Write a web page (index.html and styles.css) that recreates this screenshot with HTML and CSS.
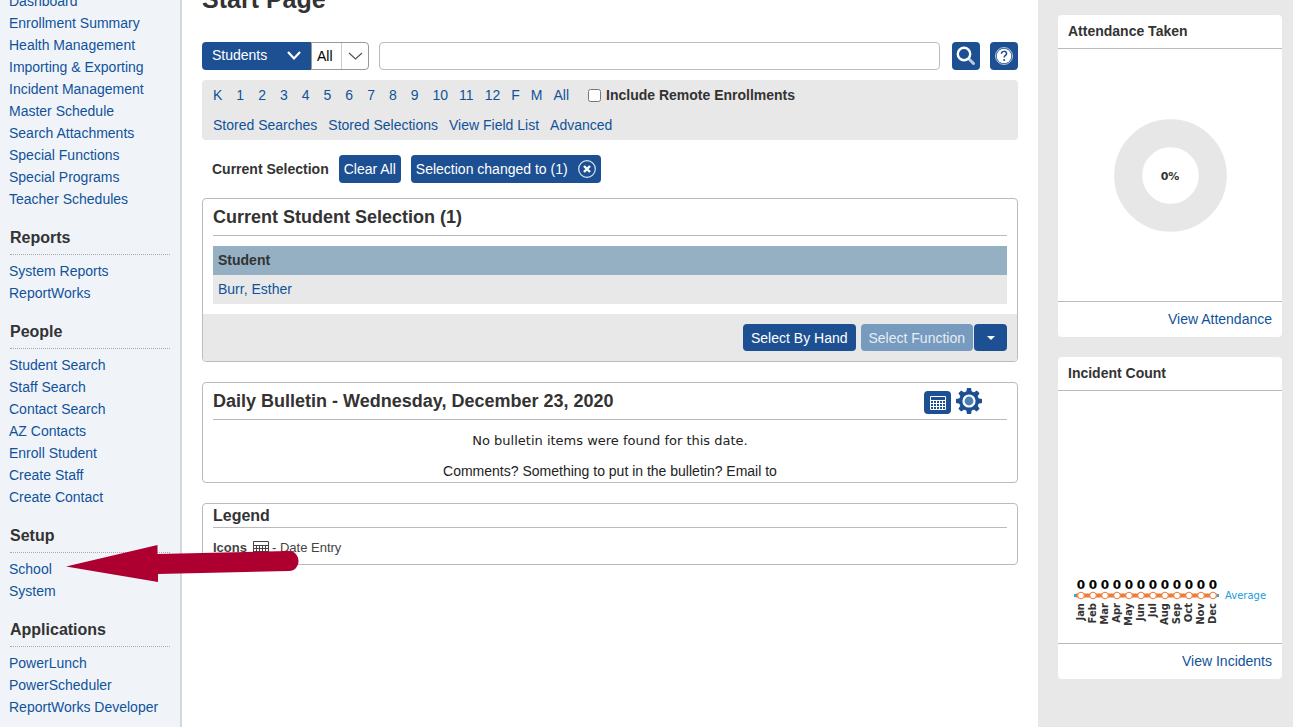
FILE: index.html
```html
<!DOCTYPE html>
<html lang="en">
<head>
    <meta charset="UTF-8">
    <meta name="viewport" content="width=device-width, initial-scale=1.0">
    <title>Start Page</title>
    <link rel="stylesheet" href="styles.css">
</head>
<body>
    <div class="layout">
        <!-- Left navigation -->
        <nav class="sidebar">
            <ul class="nav-list nav-list-first">
                <li><a href="#">Dashboard</a></li>
                <li><a href="#">Enrollment Summary</a></li>
                <li><a href="#">Health Management</a></li>
                <li><a href="#">Importing &amp; Exporting</a></li>
                <li><a href="#">Incident Management</a></li>
                <li><a href="#">Master Schedule</a></li>
                <li><a href="#">Search Attachments</a></li>
                <li><a href="#">Special Functions</a></li>
                <li><a href="#">Special Programs</a></li>
                <li><a href="#">Teacher Schedules</a></li>
            </ul>
            <h3>Reports</h3>
            <ul class="nav-list">
                <li><a href="#">System Reports</a></li>
                <li><a href="#">ReportWorks</a></li>
            </ul>
            <h3>People</h3>
            <ul class="nav-list">
                <li><a href="#">Student Search</a></li>
                <li><a href="#">Staff Search</a></li>
                <li><a href="#">Contact Search</a></li>
                <li><a href="#">AZ Contacts</a></li>
                <li><a href="#">Enroll Student</a></li>
                <li><a href="#">Create Staff</a></li>
                <li><a href="#">Create Contact</a></li>
            </ul>
            <h3>Setup</h3>
            <ul class="nav-list">
                <li><a href="#">School</a></li>
                <li><a href="#">System</a></li>
            </ul>
            <h3>Applications</h3>
            <ul class="nav-list">
                <li><a href="#">PowerLunch</a></li>
                <li><a href="#">PowerScheduler</a></li>
                <li><a href="#">ReportWorks Developer</a></li>
            </ul>
        </nav>

        <main class="content">
            <h1>Start Page</h1>

            <!-- Search -->
            <form class="search-row">
                <div class="select-wrap">
                    <select class="select-type" aria-label="Search type">
                        <option>Students</option>
                    </select>
                    <svg class="chevron chevron-light" width="14" height="11" viewBox="0 0 14 11"><path d="M1 1l6 6.500L13 1" fill="none" stroke="#fff" stroke-width="2.2"/></svg>
                </div>
                <div class="select-wrap">
                    <select class="select-scope" aria-label="Search scope">
                        <option>All</option>
                    </select>
                    <svg class="chevron chevron-dark" width="28" height="28" viewBox="0 0 28 28"><path d="M.5 1v26" stroke="#ccc"/><path d="M8 11l6.500 6L21 11" fill="none" stroke="#555" stroke-width="1.2"/></svg>
                </div>
                <input class="search-box" type="text" aria-label="Search">
                <button class="icon-button" type="button" aria-label="Search">
                    <svg width="28" height="28" viewBox="0 0 28 28"><path d="M17 17l4.500 4.500" stroke="#b9cbe0" stroke-width="3" stroke-linecap="round"/><circle cx="12" cy="12" r="6.200" fill="none" stroke="#fff" stroke-width="2.400"/></svg>
                </button>
                <button class="icon-button help-button" type="button" aria-label="Help">
                    <svg width="28" height="28" viewBox="0 0 28 28"><circle cx="14" cy="14" r="8.500" fill="none" stroke="#b9cbe0" stroke-width="1"/><circle cx="14" cy="14" r="7.300" fill="#fff"/><path d="M11.400 11.800c.1-3.200 5.300-3.200 5.200-.2-.1 1.700-2.500 1.900-2.500 3.900" fill="none" stroke="#1d5092" stroke-width="1.500"/><circle cx="14.100" cy="18" r="1" fill="#1d5092"/></svg>
                </button>
            </form>

            <div class="filters">
                <div class="filter-row grades">
                    <a class="grade" href="#">K</a>
                    <a class="grade" href="#">1</a>
                    <a class="grade" href="#">2</a>
                    <a class="grade" href="#">3</a>
                    <a class="grade" href="#">4</a>
                    <a class="grade" href="#">5</a>
                    <a class="grade" href="#">6</a>
                    <a class="grade" href="#">7</a>
                    <a class="grade" href="#">8</a>
                    <a class="grade" href="#">9</a>
                    <a href="#">10</a>
                    <a href="#">11</a>
                    <a href="#">12</a>
                    <a href="#">F</a>
                    <a href="#">M</a>
                    <a href="#">All</a>
                    <label class="remote"><input type="checkbox"> Include Remote Enrollments</label>
                </div>
                <div class="filter-row searches">
                    <a href="#">Stored Searches</a>
                    <a href="#">Stored Selections</a>
                    <a href="#">View Field List</a>
                    <a href="#">Advanced</a>
                </div>
            </div>

            <div class="selection-row">
                <strong>Current Selection</strong>
                <button class="chip" type="button">Clear All</button>
                <button class="chip" type="button">Selection changed to (1)
                    <svg width="18" height="18" viewBox="0 0 18 18"><circle cx="9" cy="9" r="8.300" fill="none" stroke="#dce6f1" stroke-width="1.200"/><path d="M6 6l6 6M12 6l-6 6" stroke="#fff" stroke-width="2.400"/></svg>
                </button>
            </div>

            <!-- Selected students -->
            <section class="box">
                <h2>Current Student Selection (1)</h2>
                <table class="students">
                    <thead>
                        <tr><th scope="col">Student</th></tr>
                    </thead>
                    <tbody>
                        <tr><td><a href="#">Burr, Esther</a></td></tr>
                    </tbody>
                </table>
                <div class="box-footer">
                    <button class="button" type="button">Select By Hand</button>
                    <div class="split-button">
                        <button class="button" type="button" disabled>Select Function</button>
                        <button class="button button-caret" type="button" aria-label="Functions">
                            <svg width="8" height="4" viewBox="0 0 8 4"><path d="M0 0h8L4 4z" fill="#fff"/></svg>
                        </button>
                    </div>
                </div>
            </section>

            <!-- Bulletin -->
            <section class="box">
                <div class="box-heading">
                    <h2>Daily Bulletin - Wednesday, December 23, 2020</h2>
                    <button class="bulletin-button calendar-button" type="button" aria-label="Choose date">
                        <svg width="16" height="14" viewBox="0 0 16 14"><path d="M.5.500h15v13H.5zM1 4.500h14M1 7.500h14M1 10.500h14M3.500 4v9M6.500 4v9M9.500 4v9M12.500 4v9" fill="none" stroke="#fff"/></svg>
                    </button>
                    <button class="bulletin-button" type="button" aria-label="Bulletin settings">
                        <svg width="26" height="26" viewBox="0 0 26 26">
                            <g fill="#1d5092">
                                <circle cx="13" cy="13" r="10"/>
                                <path id="teeth" d="M11 0h4l1 5h-6zM11 26h4l1-5h-6zM0 11v4l5 1v-6zM26 11v4l-5 1v-6z"/>
                                <use href="#teeth" transform="rotate(45 13 13)"/>
                            </g>
                            <circle cx="13" cy="13" r="5.500" fill="#4a80b5" stroke="#fff" stroke-width="2.200"/>
                        </svg>
                    </button>
                </div>
                <p class="bulletin-empty">No bulletin items were found for this date.</p>
                <p class="bulletin-contact">Comments? Something to put in the bulletin? Email to</p>
            </section>

            <!-- Legend -->
            <section class="box legend">
                <h2>Legend</h2>
                <p>
                    <strong>Icons</strong>
                    <svg width="16" height="14" viewBox="0 0 16 14"><path d="M.5.500h15v13H.5zM0 4.500h16M0 7.500h16M0 10.500h16M3.500 4v10M6.500 4v10M9.500 4v10M12.500 4v10" fill="none" stroke="#444"/></svg>
                    - Date Entry
                </p>
            </section>
        </main>

        <!-- Dashboard widgets -->
        <aside class="widgets">
            <section class="widget">
                <h2>Attendance Taken</h2>
                <svg class="chart" width="224" height="252" viewBox="0 0 224 252">
                    <circle cx="112.500" cy="126.500" r="42.300" fill="none" stroke="#e7e7e7" stroke-width="28"/>
                    <text class="donut-label" x="112" y="131">0%</text>
                </svg>
                <p class="widget-footer"><a href="#">View Attendance</a></p>
            </section>
            <section class="widget">
                <h2>Incident Count</h2>
                <svg class="chart" width="224" height="252" viewBox="0 0 224 252">
                    <path d="M16 204.500h145" stroke="#2aa5e8" stroke-width="3"/>
                    <path d="M18 204.500h141" stroke="#ed7d3a" stroke-width="4"/>
                    <g fill="#fff" stroke="#ed7d3a">
                        <circle cx="23" cy="204.500" r="3.300"/>
                        <circle cx="35" cy="204.500" r="3.300"/>
                        <circle cx="47" cy="204.500" r="3.300"/>
                        <circle cx="59" cy="204.500" r="3.300"/>
                        <circle cx="71" cy="204.500" r="3.300"/>
                        <circle cx="83" cy="204.500" r="3.300"/>
                        <circle cx="95" cy="204.500" r="3.300"/>
                        <circle cx="107" cy="204.500" r="3.300"/>
                        <circle cx="119" cy="204.500" r="3.300"/>
                        <circle cx="131" cy="204.500" r="3.300"/>
                        <circle cx="143" cy="204.500" r="3.300"/>
                        <circle cx="155" cy="204.500" r="3.300"/>
                    </g>
                    <g class="values">
                        <text x="23" y="198">0</text>
                        <text x="35" y="198">0</text>
                        <text x="47" y="198">0</text>
                        <text x="59" y="198">0</text>
                        <text x="71" y="198">0</text>
                        <text x="83" y="198">0</text>
                        <text x="95" y="198">0</text>
                        <text x="107" y="198">0</text>
                        <text x="119" y="198">0</text>
                        <text x="131" y="198">0</text>
                        <text x="143" y="198">0</text>
                        <text x="155" y="198">0</text>
                    </g>
                    <!-- months run bottom to top -->
                    <g class="months" transform="rotate(-90)">
                        <text x="-212" y="26">Jan</text>
                        <text x="-212" y="38">Feb</text>
                        <text x="-212" y="50">Mar</text>
                        <text x="-212" y="62">Apr</text>
                        <text x="-212" y="74">May</text>
                        <text x="-212" y="86">Jun</text>
                        <text x="-212" y="98">Jul</text>
                        <text x="-212" y="110">Aug</text>
                        <text x="-212" y="122">Sep</text>
                        <text x="-212" y="134">Oct</text>
                        <text x="-212" y="146">Nov</text>
                        <text x="-212" y="158">Dec</text>
                    </g>
                    <text class="average" x="167" y="208">Average</text>
                </svg>
                <p class="widget-footer"><a href="#">View Incidents</a></p>
            </section>
        </aside>
    </div>

    <!-- Arrow pointing at Setup > School -->
    <svg class="arrow" width="233" height="37" viewBox="0 0 233 37" aria-hidden="true"><path d="M0 21.500L91.500 0v9L223 6c6 0 9.500 5 9.500 10s-3.500 10-9.500 10L92 29v8z" fill="#ae0030"/></svg>
</body>
</html>
```
FILE: styles.css
```css
* {
    box-sizing: border-box;
}

body {
    margin: 0;
    font-family: "Liberation Sans", Arial, sans-serif;
    font-size: 14px;
    line-height: 20px;
    color: #333;
    background: #fff;
    position: relative;
    overflow: hidden;
}

h1, h2, h3, p, ul {
    margin: 0;
    padding: 0;
}

a {
    color: #10529a;
    text-decoration: none;
}

a:hover {
    text-decoration: underline;
}

button, select, input {
    font: inherit;
    margin: 0;
}

svg {
    display: block;
}

.layout {
    display: grid;
    grid-template-columns: 182px 1fr 255px;
    min-height: 100vh;
}

/* Left navigation */
.sidebar {
    background: #f0f4f9;
    border-right: 2px solid #d3d8dd;
    padding: 0 10px 9px 9px;
}

.sidebar h3 {
    margin: 16px 0 5px 1px;
    padding-bottom: 4px;
    border-bottom: 1px dotted #aaa;
    font-size: 16px;
    line-height: 24px;
}

.nav-list {
    list-style: none;
    line-height: 22px;
}

.nav-list-first {
    margin-top: -10px;
}

/* Main column */
.content {
    padding: 0 20px;
}

h1 {
    margin: -15px 0 29px;
    font-size: 25px;
    line-height: 28px;
}

.search-row {
    display: flex;
}

.select-wrap {
    display: grid;
    align-items: center;
}

.select-wrap select,
.select-wrap svg {
    grid-area: 1 / 1;
}

.select-wrap select {
    appearance: none;
    height: 28px;
}

.select-type {
    width: 109px;
    padding: 0 10px 2px;
    border: 0;
    border-radius: 4px 0 0 4px;
    background: #1d5092;
    color: #fff;
}

.select-scope {
    width: 58px;
    padding: 0 5px;
    border: 1px solid #999;
    border-radius: 0 4px 4px 0;
    background: #fff;
    color: #000;
}

.chevron {
    justify-self: end;
    pointer-events: none;
}

.chevron-light {
    margin-right: 10px;
}

.search-box {
    flex: 1;
    min-width: 0;
    height: 28px;
    margin: 0 12px 0 10px;
    padding: 0 8px;
    border: 1px solid #bbb;
    border-radius: 4px;
}

.icon-button {
    width: 28px;
    height: 28px;
    padding: 0;
    border: 0;
    border-radius: 4px;
    background: #1d5092;
}

.help-button {
    margin-left: 10px;
}

.filters {
    margin-top: 10px;
    padding: 0 11px;
    border-radius: 4px;
    background: #e8e8e8;
}

.filter-row {
    display: flex;
    align-items: center;
    height: 30px;
}

.grades,
.searches {
    gap: 11px;
}

.grade {
    margin-right: 3px;
}

.remote {
    display: flex;
    align-items: center;
    gap: 5px;
    margin-left: 8px;
    font-weight: bold;
}

.remote input {
    width: 13px;
    height: 13px;
}

.selection-row {
    display: flex;
    align-items: center;
    gap: 10px;
    margin: 15px 0;
    padding-left: 10px;
}

.chip {
    display: flex;
    align-items: center;
    gap: 10px;
    height: 28px;
    padding: 0 5px;
    border: 0;
    border-radius: 4px;
    background: #1d5092;
    color: #fff;
}

/* Boxes */
.box {
    margin-bottom: 20px;
    padding: 0 10px;
    border: 1px solid #bbb;
    border-radius: 4px;
    overflow: hidden;
}

.box h2 {
    border-bottom: 1px solid #bbb;
    font-size: 18px;
    line-height: 36px;
}

.students {
    width: 100%;
    margin: 10px 0;
    border-collapse: collapse;
    line-height: 19px;
    text-align: left;
}

.students th,
.students td {
    padding: 5px;
}

.students th {
    background: #94b0c2;
}

.students td {
    background: #e8e8e8;
}

.box-footer {
    display: flex;
    justify-content: flex-end;
    gap: 5px;
    margin: 0 -10px;
    padding: 10px;
    background: #e8e8e8;
}

.split-button {
    display: flex;
    gap: 1px;
}

.button {
    height: 27px;
    padding: 0 8px;
    border: 0;
    border-radius: 4px;
    background: #1d5092;
    color: #fff;
}

.button:disabled {
    background: #769bbf;
    color: #e6edf4;
}

.button-caret {
    display: flex;
    align-items: center;
    justify-content: center;
    width: 33px;
}

.box-heading {
    display: flex;
    align-items: center;
    gap: 5px;
    padding-right: 25px;
    border-bottom: 1px solid #bbb;
}

.box-heading h2 {
    flex: 1;
    border-bottom: 0;
}

.bulletin-button {
    padding: 0;
    border: 0;
    background: none;
}

.calendar-button {
    display: flex;
    align-items: center;
    justify-content: center;
    width: 27px;
    height: 23px;
    margin-top: 3px;
    border-radius: 4px;
    background: #1d5092;
}

.bulletin-empty {
    margin-top: 11px;
    font-family: "DejaVu Sans", Verdana, sans-serif;
    font-size: 13px;
    text-align: center;
    color: #222;
}

.bulletin-contact {
    margin: 10px 0 1px;
    text-align: center;
    color: #222;
}

.legend h2 {
    font-size: 16px;
    line-height: 23px;
}

.legend p {
    display: flex;
    align-items: center;
    gap: 6px;
    padding: 10px 0 6px;
    font-size: 13px;
    color: #444;
}

.legend svg {
    margin-right: -3px;
}

/* Right column */
.widgets {
    padding: 15px 11px 20px 20px;
    background: #e8e8e8;
}

.widget {
    margin-bottom: 20px;
    border-radius: 4px;
    background: #fff;
}

.widget h2 {
    padding-left: 10px;
    border-bottom: 1px solid #bbb;
    font-size: 14px;
    line-height: 33px;
}

.widget-footer {
    padding-right: 10px;
    border-top: 1px solid #bbb;
    line-height: 35px;
    text-align: right;
}

.chart {
    margin: 0 auto;
    font-family: "DejaVu Sans", Verdana, sans-serif;
    font-size: 10px;
}

.donut-label {
    font-size: 11px;
    font-weight: bold;
    text-anchor: middle;
    fill: #333;
}

.values {
    font-size: 12px;
    font-weight: bold;
    text-anchor: middle;
    fill: #000;
}

.months {
    font-weight: bold;
    text-anchor: end;
    fill: #333;
}

.average {
    fill: #1a9be0;
}

.arrow {
    position: absolute;
    top: 545px;
    left: 66px;
    pointer-events: none;
}
```
